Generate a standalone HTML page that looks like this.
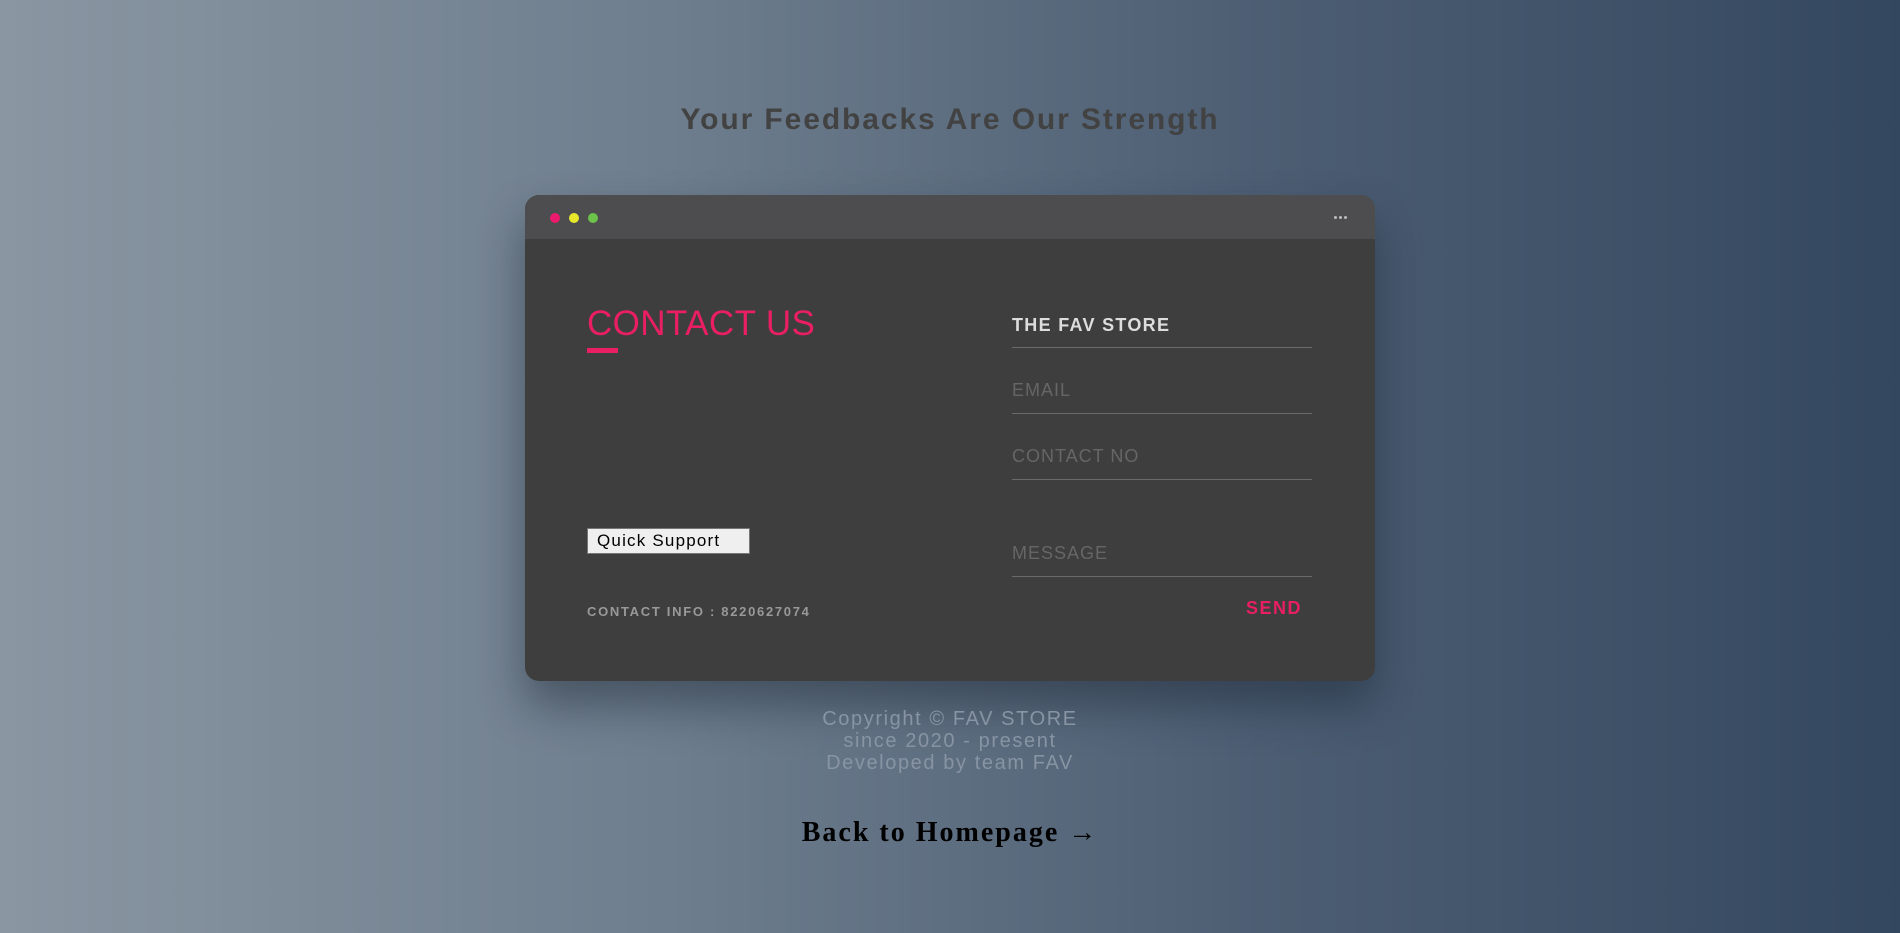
<!DOCTYPE html>
<html><head><meta charset="utf-8"><style>
*{margin:0;padding:0;box-sizing:border-box}
html,body{width:1900px;height:933px;overflow:hidden}
body{background:linear-gradient(90deg,#8a96a2 0%,#6e7e8e 35%,#4e5f74 65%,#33475f 100%);font-family:"Liberation Sans",sans-serif;position:relative}
.title{position:absolute;top:103px;left:0;width:1900px;text-align:center;font-size:30px;font-weight:bold;color:#424242;letter-spacing:1.9px}
.card{position:absolute;left:525px;top:195px;width:850px;height:486px;background:#3e3e3e;border-radius:14px;box-shadow:0 25px 45px rgba(20,30,45,.45);overflow:hidden}
.bar{height:44px;background:#4d4d4f;position:relative}
.dot{position:absolute;top:18px;width:10px;height:10px;border-radius:50%}
.menu{position:absolute;left:809px;top:21px;}
.menu i{display:inline-block;width:3px;height:3px;background:#bbb;border-radius:50%;margin-right:2px;vertical-align:top}
.ct{position:absolute;left:62px;top:109px;font-size:35px;color:#e91e63;white-space:nowrap;letter-spacing:0.4px}
.ul{position:absolute;left:62px;top:153px;width:31px;height:5px;background:#e91e63}
.btn{position:absolute;left:62px;top:333px;width:163px;height:26px;background:#efefef;border:1px solid #767676;font-size:17px;letter-spacing:1.2px;color:#000;line-height:24px;padding-left:9px;white-space:nowrap}
.info{position:absolute;left:62px;top:409px;font-size:13px;font-weight:bold;color:#999;letter-spacing:1.7px;white-space:nowrap}
.f{position:absolute;left:487px;width:300px;border-bottom:1px solid #6a6a6a;font-size:18px;letter-spacing:1px;color:#666;white-space:nowrap}
.send{position:absolute;left:721px;top:403px;font-size:18px;font-weight:bold;color:#e91e63;letter-spacing:1.5px}
.copy{position:absolute;top:708px;left:0;width:1900px;text-align:center;color:#8794a3;font-size:20px;line-height:22px;letter-spacing:1.6px}
.back{position:absolute;top:817px;left:0;width:1900px;text-align:center;font-family:"Liberation Serif",serif;font-weight:bold;font-size:28px;color:#000;letter-spacing:2px}
</style></head><body>
<div class="title">Your Feedbacks Are Our Strength</div>
<div class="card">
 <div class="bar">
  <span class="dot" style="left:25px;background:#ec1a6c"></span>
  <span class="dot" style="left:44px;background:#e8e82a"></span>
  <span class="dot" style="left:63px;background:#6cc24a"></span>
  <div class="menu"><i></i><i></i><i></i></div>
 </div>
 <div class="ct">CONTACT US</div>
 <div class="ul"></div>
 <div class="btn">Quick Support</div>
 <div class="info">CONTACT INFO : 8220627074</div>
 <div class="f" style="top:120px;height:33px;color:#ddd;font-weight:bold;letter-spacing:1.3px">THE FAV STORE</div>
 <div class="f" style="top:185px;height:34px;">EMAIL</div>
 <div class="f" style="top:251px;height:34px;">CONTACT NO</div>
 <div class="f" style="top:348px;height:34px;">MESSAGE</div>
 <div class="send">SEND</div>
</div>
<div class="copy">Copyright © FAV STORE<br>since 2020 - present<br>Developed by team FAV</div>
<div class="back">Back to Homepage →</div>
</body></html>
